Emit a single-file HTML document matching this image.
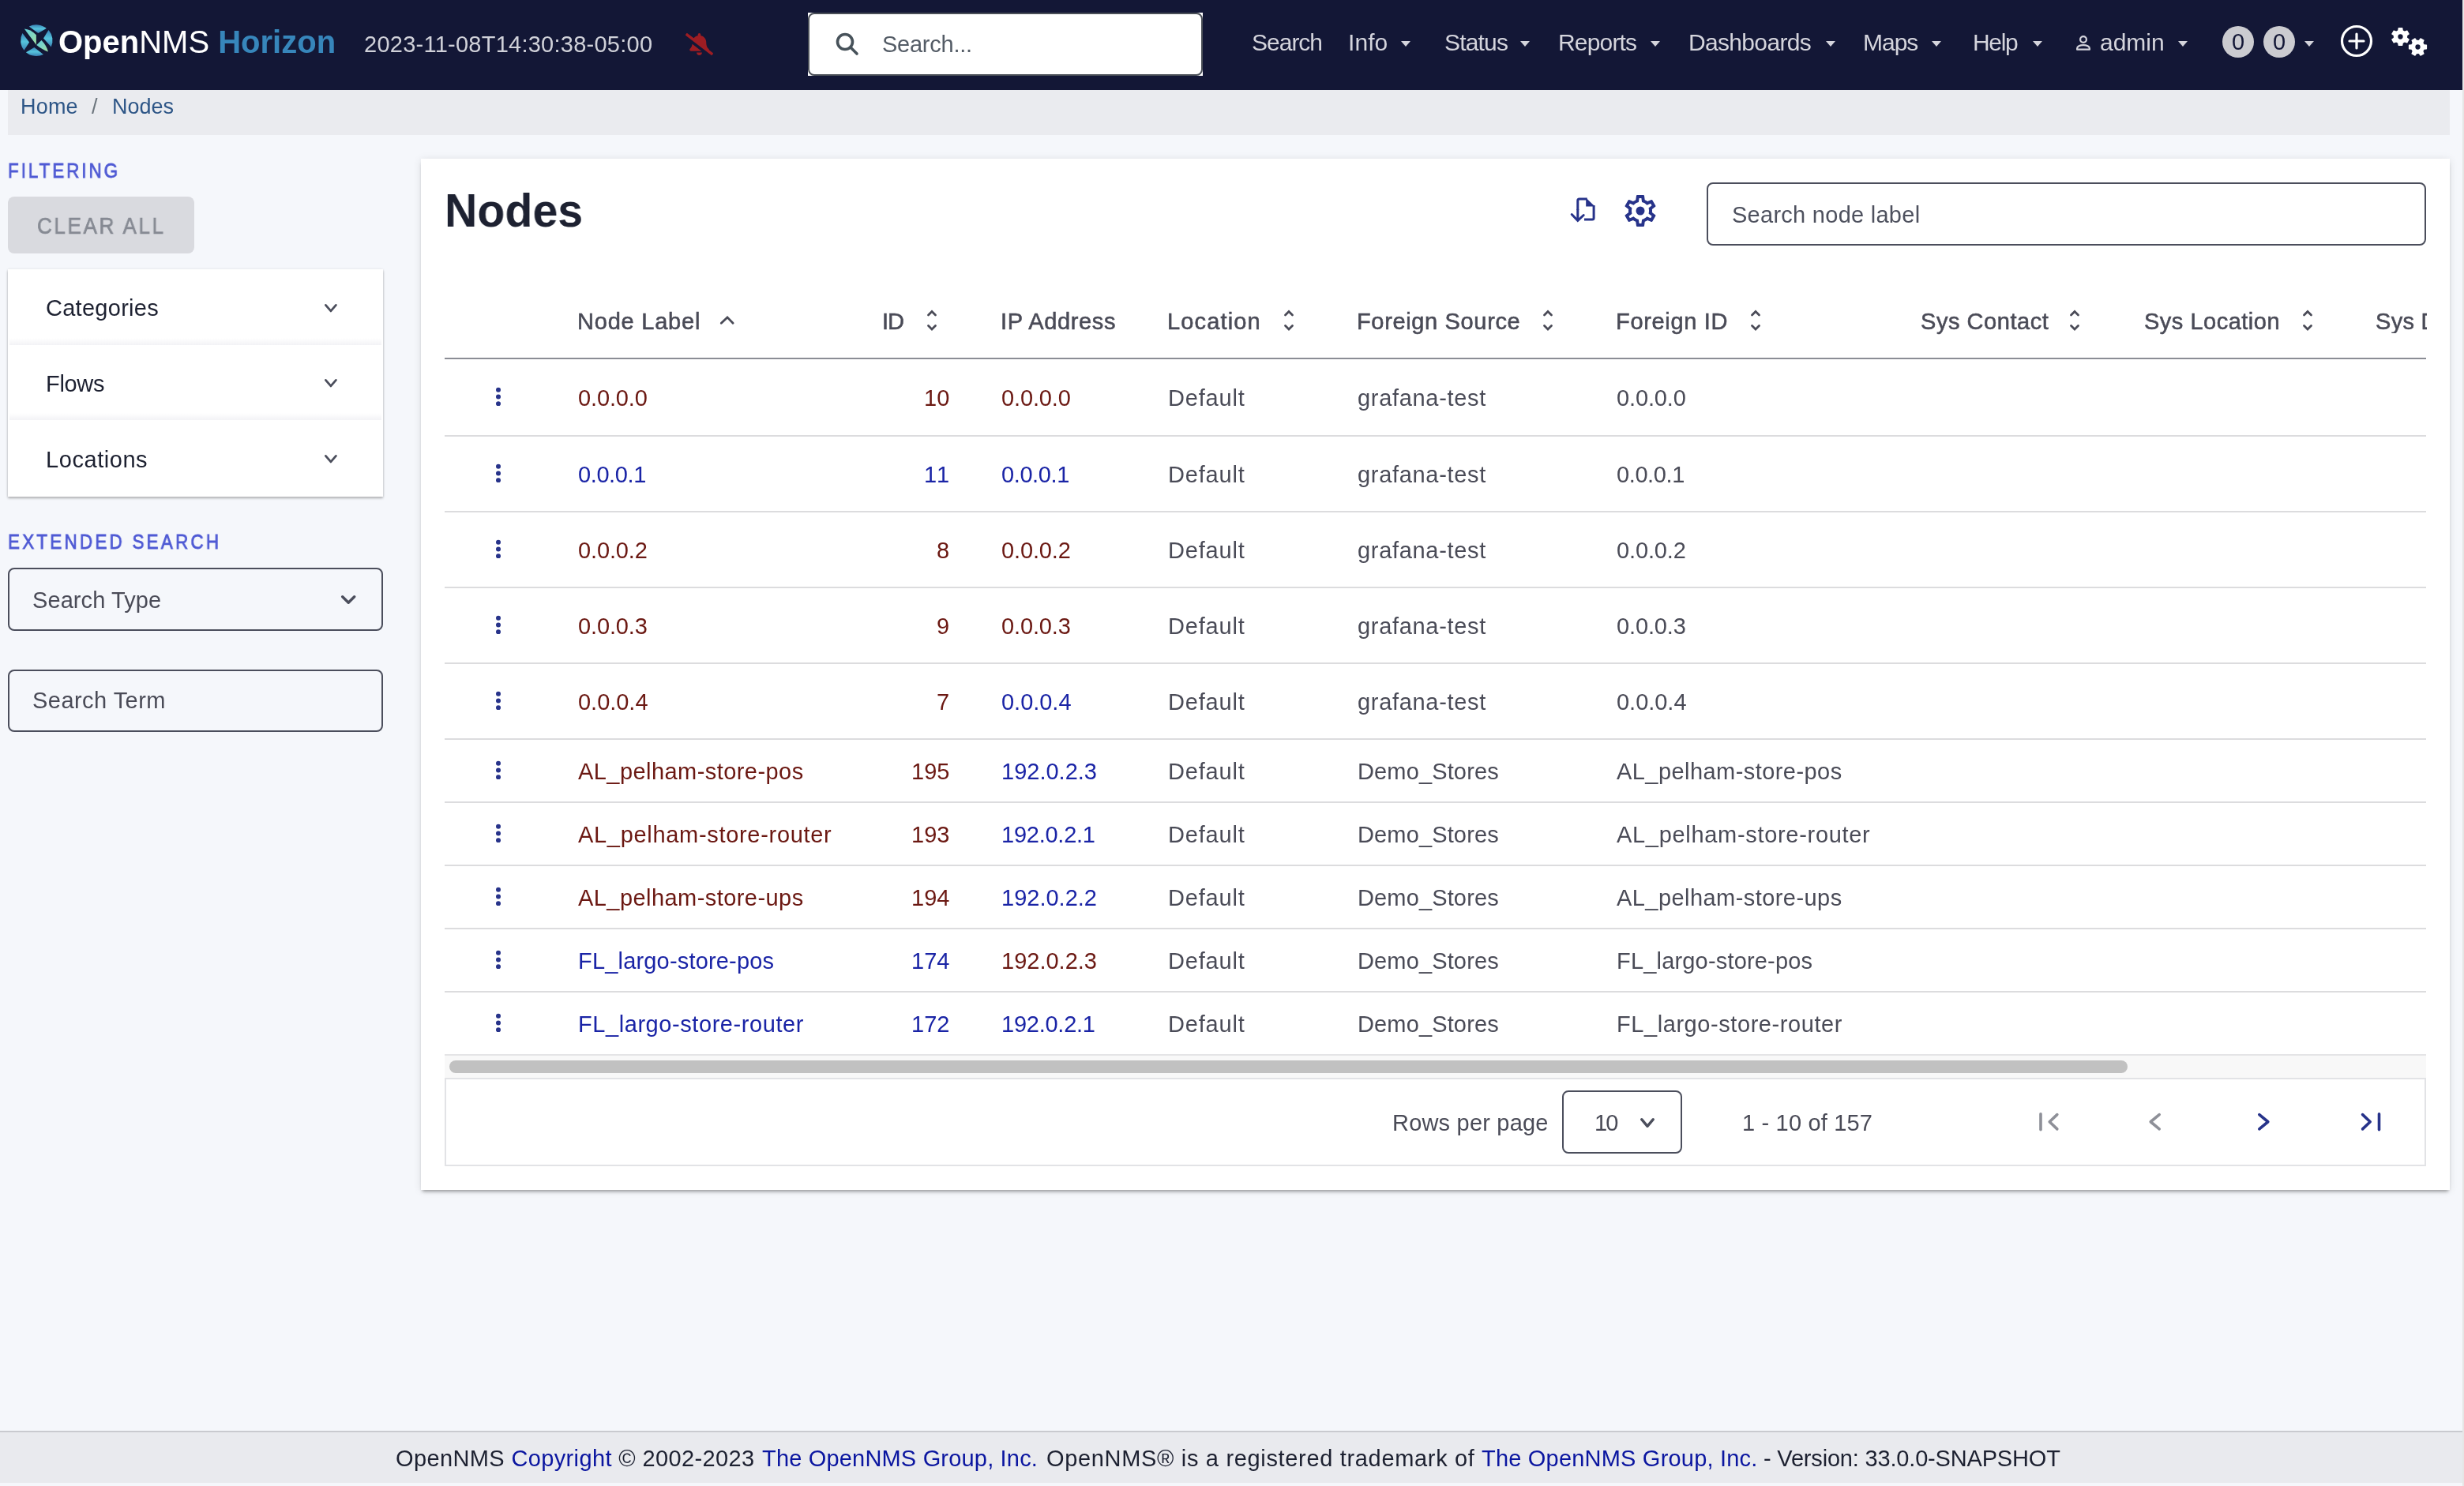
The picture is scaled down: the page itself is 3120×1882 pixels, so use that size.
<!DOCTYPE html><html><head><meta charset="utf-8"><style>
html,body{margin:0;padding:0;background:#f5f7fb;}
body{width:3120px;height:1882px;overflow:hidden;position:relative;background:#f5f7fb;font-family:"Liberation Sans", sans-serif;}
.t{position:absolute;white-space:nowrap;will-change:transform;}
.b{position:absolute;}
</style></head><body>
<div class="b" style="left:3118px;top:0px;width:2px;height:1882px;background:#e6e6e6;"></div>
<div class="b" style="left:0px;top:0px;width:3118px;height:114px;background:#131736;"></div>
<svg class="b" style="left:20px;top:26px" width="52" height="52" viewBox="0 0 52 52"><defs><linearGradient id="lg" x1="0" y1="0" x2="0" y2="1"><stop offset="0" stop-color="#3a84b8"/><stop offset="0.5" stop-color="#56c4dd"/><stop offset="1" stop-color="#3a80b4"/></linearGradient>
<linearGradient id="lf" x1="0" y1="0" x2="1" y2="1"><stop offset="0" stop-color="#62d0dc"/><stop offset="0.5" stop-color="#80d6c4"/><stop offset="1" stop-color="#a0e0a0"/></linearGradient></defs>
<g fill="url(#lg)">
<path d="M16.8 7.5 A20.2 20.2 0 0 1 38.8 10 L28.3 15.9 Z"/>
<path d="M41.5 12.1 A20.2 20.2 0 0 1 44.8 33.6 L35 22.4 Z"/>
<path d="M35 42.9 A20.2 20.2 0 0 1 12.9 40.2 L23.4 34.1 Z"/>
<path d="M10.5 37.8 A20.2 20.2 0 0 1 8.4 15.9 L17.1 27.6 Z"/>
</g>
<g fill="url(#lf)">
<path d="M10.8 10.5 C15.7 10.8 21 13.3 25.9 18.2 L25.9 30.8 Z"/>
<path d="M26.2 31.1 L32.5 25 C37 29.5 40 35 40.9 39.5 C36 38 31 35 26.2 31.1 Z"/>
</g>
</svg>
<div class="t " style="left:74.0px;top:33.1px;font-size:40px;line-height:40px;color:#ffffff;"><b>Open</b>NMS <b style="color:#3786bb">Horizon</b></div>
<div class="t " style="left:461.0px;top:41.9px;font-size:29px;line-height:29px;color:#d0d1d9;letter-spacing:0.25px;">2023-11-08T14:30:38-05:00</div>
<svg class="b" style="left:868px;top:42px" width="35" height="28" viewBox="0 0 640 512"><path fill="#9d1d23" d="M633.82 458.1l-90.62-70.05c.19-1.38.8-2.66.8-4.06.05-7.55-2.610-15.27-8.61-21.71-19.32-20.75-55.470-51.96-55.47-154.21 0-77.71-54.48-139.91-127.94-155.16V32c0-17.67-14.32-32-31.98-32s-31.98 14.33-31.98 32v20.84c-40.33 8.38-74.66 31.07-97.59 62.57L45.47 3.37C38.49-2.05 28.430-.8 23.01 6.18L3.37 31.45C-2.05 38.42-.8 48.47 6.18 53.9l588.35 454.73c6.98 5.43 17.03 4.17 22.46-2.81l19.64-25.27c5.42-6.97 4.17-17.02-2.81-22.45zM157.23 251.54c-8.61 67.96-36.41 93.33-52.62 110.75-6 6.45-8.66 14.16-8.61 21.71.11 16.4 12.98 32 32.1 32h241.92L157.23 251.54zM320 512c35.32 0 63.97-28.65 63.97-64H256.03c0 35.35 28.65 64 63.970 64z"/></svg>
<div class="b" style="left:1023px;top:16px;width:500px;height:80px;background:#fff;"></div>
<div class="b" style="left:1023px;top:16px;width:500px;height:80px;box-sizing:border-box;border:2px solid #4a4f57;border-radius:8px;"></div>
<svg class="b" style="left:1057px;top:40px" width="32" height="32" viewBox="0 0 32 32"><circle cx="13" cy="13" r="9.5" fill="none" stroke="#47525a" stroke-width="3.6"/><path d="M20 20 L28 28" stroke="#47525a" stroke-width="3.6" stroke-linecap="round"/></svg>
<div class="t " style="left:1117.0px;top:41.9px;font-size:29px;line-height:29px;color:#545c66;letter-spacing:-0.25px;">Search...</div>
<div class="t " style="left:1585.0px;top:39.2px;font-size:30px;line-height:30px;color:#d4d4dc;letter-spacing:-1.00px;">Search</div>
<div class="t " style="left:1707.0px;top:39.2px;font-size:30px;line-height:30px;color:#d4d4dc;letter-spacing:0.07px;">Info</div>
<svg class="b" style="left:1774px;top:52px" width="12" height="7" viewBox="0 0 12 7"><path d="M0 0 H12 L6.0 7z" fill="#d4d4dc"/></svg>
<div class="t " style="left:1828.5px;top:39.2px;font-size:30px;line-height:30px;color:#d4d4dc;letter-spacing:-0.82px;">Status</div>
<svg class="b" style="left:1925px;top:52px" width="12" height="7" viewBox="0 0 12 7"><path d="M0 0 H12 L6.0 7z" fill="#d4d4dc"/></svg>
<div class="t " style="left:1973.0px;top:39.2px;font-size:30px;line-height:30px;color:#d4d4dc;letter-spacing:-0.83px;">Reports</div>
<svg class="b" style="left:2090px;top:52px" width="12" height="7" viewBox="0 0 12 7"><path d="M0 0 H12 L6.0 7z" fill="#d4d4dc"/></svg>
<div class="t " style="left:2138.0px;top:39.2px;font-size:30px;line-height:30px;color:#d4d4dc;letter-spacing:-0.67px;">Dashboards</div>
<svg class="b" style="left:2312px;top:52px" width="12" height="7" viewBox="0 0 12 7"><path d="M0 0 H12 L6.0 7z" fill="#d4d4dc"/></svg>
<div class="t " style="left:2359.0px;top:39.2px;font-size:30px;line-height:30px;color:#d4d4dc;letter-spacing:-1.00px;">Maps</div>
<svg class="b" style="left:2446px;top:52px" width="12" height="7" viewBox="0 0 12 7"><path d="M0 0 H12 L6.0 7z" fill="#d4d4dc"/></svg>
<div class="t " style="left:2498.0px;top:39.2px;font-size:30px;line-height:30px;color:#d4d4dc;letter-spacing:-1.33px;">Help</div>
<svg class="b" style="left:2574px;top:52px" width="12" height="7" viewBox="0 0 12 7"><path d="M0 0 H12 L6.0 7z" fill="#d4d4dc"/></svg>
<div class="t " style="left:2659.0px;top:39.2px;font-size:30px;line-height:30px;color:#d4d4dc;">admin</div>
<svg class="b" style="left:2758px;top:52px" width="12" height="7" viewBox="0 0 12 7"><path d="M0 0 H12 L6.0 7z" fill="#d4d4dc"/></svg>
<svg class="b" style="left:2628px;top:44px" width="20" height="22" viewBox="0 0 20 22"><circle cx="10" cy="6" r="3.9" fill="none" stroke="#d4d4dc" stroke-width="2.2"/><path d="M2.1 18.7 v-1.2 c0-2.6 3.6-4.4 7.9-4.4 s7.9 1.8 7.9 4.4 v1.2z" fill="none" stroke="#d4d4dc" stroke-width="2.2" stroke-linejoin="round"/></svg>
<div class="b" style="left:2814px;top:33px;width:40px;height:40px;background:#cbcbd0;border-radius:50%;"></div>
<div class="t " style="left:2825.5px;top:38.9px;font-size:29px;line-height:29px;color:#131736;">0</div>
<div class="b" style="left:2866px;top:33px;width:40px;height:40px;background:#cbcbd0;border-radius:50%;"></div>
<div class="t " style="left:2877.5px;top:38.9px;font-size:29px;line-height:29px;color:#131736;">0</div>
<svg class="b" style="left:2918px;top:52px" width="12" height="7" viewBox="0 0 12 7"><path d="M0 0 H12 L6.0 7z" fill="#d4d4dc"/></svg>
<svg class="b" style="left:2962px;top:30px" width="44" height="44" viewBox="0 0 44 44"><circle cx="22" cy="22" r="18.5" fill="none" stroke="#fff" stroke-width="3.2"/><path d="M22 13 V31 M13 22 H31" stroke="#fff" stroke-width="3.2" stroke-linecap="round"/></svg>
<svg class="b" style="left:3024.8px;top:31.7px" width="29" height="29" viewBox="0 0 24 24"><path d="M19.14 12.94c.04-.3.06-.61.06-.94 0-.32-.02-.64-.07-.94l2.03-1.58c.18-.14.23-.41.12-.61l-1.92-3.32c-.12-.22-.37-.29-.59-.22l-2.39.96c-.5-.38-1.03-.7-1.62-.94l-.36-2.54c-.04-.24-.24-.41-.48-.41h-3.84c-.24 0-.43.17-.47.41l-.36 2.54c-.59.24-1.13.57-1.62.94l-2.39-.96c-.22-.08-.47 0-.59.22L2.74 8.870c-.12.21-.08.47.12.61l2.03 1.58c-.05.3-.09.63-.09.94s.02.64.07.94l-2.03 1.58c-.18.14-.23.41-.12.61l1.92 3.32c.12.22.37.29.59.22l2.39-.96c.5.38 1.03.7 1.62.94l.36 2.54c.05.24.24.41.48.41h3.84c.24 0 .44-.17.47-.41l.36-2.54c.59-.24 1.13-.56 1.62-.94l2.39.96c.22.08.47 0 .59-.22l1.92-3.32c.12-.22.07-.47-.12-.61l-2.01-1.58z" fill="#fff"/><circle cx="12" cy="12" r="2.6" fill="#131736"/></svg>
<svg class="b" style="left:3046.9px;top:45.3px" width="29" height="29" viewBox="0 0 24 24"><g transform="rotate(30 12 12)"><path d="M19.14 12.94c.04-.3.06-.61.06-.94 0-.32-.02-.64-.07-.94l2.03-1.58c.18-.14.23-.41.12-.61l-1.92-3.32c-.12-.22-.37-.29-.59-.22l-2.39.96c-.5-.38-1.03-.7-1.62-.94l-.36-2.54c-.04-.24-.24-.41-.48-.41h-3.84c-.24 0-.43.17-.47.41l-.36 2.54c-.59.24-1.13.57-1.62.94l-2.39-.96c-.22-.08-.47 0-.59.22L2.74 8.870c-.12.21-.08.47.12.61l2.03 1.58c-.05.3-.09.63-.09.94s.02.64.07.94l-2.03 1.58c-.18.14-.23.41-.12.61l1.92 3.32c.12.22.37.29.59.22l2.39-.96c.5.38 1.03.7 1.62.94l.36 2.54c.05.24.24.41.48.41h3.84c.24 0 .44-.17.47-.41l.36-2.54c.59-.24 1.13-.56 1.62-.94l2.39.96c.22.08.47 0 .59-.22l1.92-3.32c.12-.22.07-.47-.12-.61l-2.01-1.58z" fill="#fff"/></g><circle cx="12" cy="12" r="2.6" fill="#131736"/></svg>
<div class="b" style="left:10px;top:114px;width:3092px;height:57px;background:#eaebef;"></div>
<div class="t " style="left:26.0px;top:121.7px;font-size:27px;line-height:27px;color:#2e5687;letter-spacing:0.20px;">Home</div>
<div class="t " style="left:116.0px;top:121.7px;font-size:27px;line-height:27px;color:#6c757d;">/</div>
<div class="t " style="left:142.0px;top:121.7px;font-size:27px;line-height:27px;color:#2e5687;">Nodes</div>
<div class="t " style="left:10.0px;top:204.1px;font-size:25.5px;line-height:25.5px;color:#4f5ad4;letter-spacing:3.35px;-webkit-text-stroke:0.8px currentColor;transform:scaleX(0.88);transform-origin:0 0;">FILTERING</div>
<div class="b" style="left:10px;top:249px;width:236px;height:72px;background:#d9dadf;border-radius:8px;"></div>
<div class="t " style="left:47.0px;top:272.4px;font-size:29px;line-height:29px;color:#868a93;letter-spacing:2.90px;-webkit-text-stroke:0.7px currentColor;transform:scaleX(0.9);transform-origin:0 0;">CLEAR ALL</div>
<div class="b" style="left:10px;top:341px;width:475px;height:288px;background:#fff;box-shadow:0 2px 3px rgba(0,0,0,0.28),0 0 3px rgba(0,0,0,0.08);"></div>
<div class="b" style="left:12px;top:428px;width:471px;height:9px;background:linear-gradient(rgba(244,244,246,0),#f3f3f6);"></div>
<div class="b" style="left:12px;top:523px;width:471px;height:9px;background:linear-gradient(rgba(244,244,246,0),#f3f3f6);"></div>
<div class="t " style="left:58.0px;top:375.9px;font-size:29px;line-height:29px;color:#1d2131;letter-spacing:0.27px;">Categories</div>
<svg class="b" style="left:406.7px;top:380.5px" width="23" height="18" viewBox="0 0 23 18"><path d="M5.40 5.40 L11.90 12.90 L18.40 5.40" fill="none" stroke="#4b4e5c" stroke-width="2.8" stroke-linecap="round" stroke-linejoin="round"/></svg>
<div class="t " style="left:58.0px;top:472.4px;font-size:29px;line-height:29px;color:#1d2131;letter-spacing:-0.32px;">Flows</div>
<svg class="b" style="left:406.7px;top:476px" width="23" height="18" viewBox="0 0 23 18"><path d="M5.40 5.40 L11.90 12.90 L18.40 5.40" fill="none" stroke="#4b4e5c" stroke-width="2.8" stroke-linecap="round" stroke-linejoin="round"/></svg>
<div class="t " style="left:58.0px;top:568.4px;font-size:29px;line-height:29px;color:#1d2131;letter-spacing:0.56px;">Locations</div>
<svg class="b" style="left:406.7px;top:572px" width="23" height="18" viewBox="0 0 23 18"><path d="M5.40 5.40 L11.90 12.90 L18.40 5.40" fill="none" stroke="#4b4e5c" stroke-width="2.8" stroke-linecap="round" stroke-linejoin="round"/></svg>
<div class="t " style="left:10.0px;top:673.8px;font-size:25.5px;line-height:25.5px;color:#4f5ad4;letter-spacing:3.66px;-webkit-text-stroke:0.8px currentColor;transform:scaleX(0.88);transform-origin:0 0;">EXTENDED SEARCH</div>
<div class="b" style="left:10px;top:719px;width:475px;height:80px;box-sizing:border-box;border:2px solid #4b4e5c;border-radius:8px;"></div>
<div class="t " style="left:41.0px;top:745.9px;font-size:29px;line-height:29px;color:#4a4b57;letter-spacing:0.09px;">Search Type</div>
<svg class="b" style="left:427.6px;top:750px" width="26" height="19" viewBox="0 0 26 19"><path d="M5.70 5.70 L13.20 13.30 L20.70 5.70" fill="none" stroke="#4b4e5c" stroke-width="3.4" stroke-linecap="round" stroke-linejoin="round"/></svg>
<div class="b" style="left:10px;top:848px;width:475px;height:79px;box-sizing:border-box;border:2px solid #4b4e5c;border-radius:8px;"></div>
<div class="t " style="left:41.0px;top:873.4px;font-size:29px;line-height:29px;color:#4a4b57;letter-spacing:0.46px;">Search Term</div>
<div class="b" style="left:533px;top:201px;width:2569px;height:1306px;background:#fff;box-shadow:0 4px 4px -2px rgba(0,0,0,0.34),0 1px 10px rgba(0,0,0,0.10);"></div>
<div class="t " style="left:563.0px;top:237.2px;font-size:60px;line-height:60px;color:#1d2131;font-weight:700;transform:scaleX(0.955);transform-origin:0 0;">Nodes</div>
<svg class="b" style="left:1986px;top:246px" width="38" height="38" viewBox="0 0 38 38"><path d="M11.8 20 V8 a2 2 0 0 1 2-2 H23.7" fill="none" stroke="#27338a" stroke-width="3"/><path d="M22.2 4.5 L33.6 15.5 H22.2z" fill="#27338a"/><path d="M32.1 14 V30 a2 2 0 0 1 -2 2 H20" fill="none" stroke="#27338a" stroke-width="3"/><path d="M11.8 19 V33" fill="none" stroke="#27338a" stroke-width="3"/><path d="M4.2 25.5 L11.8 33.3 L19.2 26.5" fill="none" stroke="#27338a" stroke-width="3" stroke-linecap="round" stroke-linejoin="miter"/></svg>
<svg class="b" style="left:2053px;top:243px" width="48" height="48" viewBox="0 0 24 24"><path d="M19.43 12.98c.04-.32.07-.64.07-.98 0-.34-.03-.66-.07-.98l2.11-1.65c.19-.15.24-.42.12-.64l-2-3.46c-.09-.16-.26-.25-.44-.25-.06 0-.12.01-.17.03l-2.49 1c-.52-.4-1.08-.73-1.690-.98l-.38-2.65C14.46 2.18 14.25 2 14 2h-4c-.25 0-.46.18-.49.42l-.38 2.65c-.61.25-1.17.59-1.69.98l-2.49-1c-.06-.02-.12-.03-.18-.03-.17 0-.34.09-.43.25l-2 3.460c-.13.22-.07.49.12.64l2.11 1.65c-.04.32-.07.65-.07.98 0 .33.03.66.07.98l-2.11 1.65c-.19.15-.24.42-.12.64l2 3.46c.09.16.26.25.44.25.06 0 .12-.01.17-.03l2.49-1c.52.4 1.08.73 1.69.98l.38 2.65c.03.24.24.42.49.42h4c.25 0 .46-.18.49-.42l.38-2.65c.61-.25 1.17-.59 1.69-.98l2.49 1c.06.02.12.03.18.03.17 0 .34-.09.43-.25l2-3.46c.12-.22.07-.49-.12-.64l-2.11-1.65zm-1.98-1.71c.04.31.05.52.05.73 0 .21-.02.43-.05.73l-.14 1.13.89.7 1.08.84-.7 1.21-1.27-.51-1.04-.42-.9.68c-.43.32-.84.56-1.25.73l-1.06.43-.16 1.130-.2 1.35h-1.4l-.19-1.35-.16-1.13-1.06-.43c-.43-.18-.83-.41-1.23-.71l-.91-.7-1.06.43-1.27.51-.7-1.21 1.08-.84.89-.7-.14-1.13c-.03-.31-.05-.54-.05-.74s.02-.43.05-.73l.14-1.13-.89-.7-1.08-.84.7-1.21 1.27.51 1.04.42.9-.68c.43-.32.84-.56 1.25-.73l1.06-.43.16-1.13.2-1.35h1.39l.19 1.35.16 1.13 1.06.43c.43.18.83.41 1.23.71l.91.7 1.06-.43 1.27-.51.7 1.21-1.07.85-.89.7.14 1.13z" fill="#27338a" fill-rule="evenodd"/><circle cx="12" cy="12" r="2.75" fill="#27338a"/></svg>
<div class="b" style="left:2161px;top:231px;width:911px;height:80px;box-sizing:border-box;border:2px solid #4b4e5c;border-radius:8px;"></div>
<div class="t " style="left:2193.0px;top:257.7px;font-size:29px;line-height:29px;color:#4e515e;letter-spacing:0.27px;">Search node label</div>
<div class="t " style="left:731.0px;top:392.6px;font-size:29px;line-height:29px;color:#4a4b57;letter-spacing:0.78px;-webkit-text-stroke:0.55px currentColor;">Node Label</div>
<svg class="b" style="left:908px;top:396px" width="26" height="18" viewBox="0 0 26 18"><path d="M5.3 13.3 L13 5.9 L20.1 13.3" fill="none" stroke="#4a4b57" stroke-width="2.8" stroke-linecap="round" stroke-linejoin="miter"/></svg>
<div class="t " style="left:1117.0px;top:392.6px;font-size:29px;line-height:29px;color:#4a4b57;letter-spacing:-1.00px;-webkit-text-stroke:0.55px currentColor;">ID</div>
<svg class="b" style="left:1170.0px;top:388px" width="20" height="36" viewBox="0 0 20 36"><path d="M5.5 11 L10 6.5 L14.5 11 M5.5 24.5 L10 29 L14.5 24.5" fill="none" stroke="#4a4b57" stroke-width="2.8" stroke-linecap="round" stroke-linejoin="miter"/></svg>
<div class="t " style="left:1267.0px;top:392.6px;font-size:29px;line-height:29px;color:#4a4b57;letter-spacing:0.63px;-webkit-text-stroke:0.55px currentColor;">IP Address</div>
<div class="t " style="left:1478.0px;top:392.6px;font-size:29px;line-height:29px;color:#4a4b57;letter-spacing:1.14px;-webkit-text-stroke:0.55px currentColor;">Location</div>
<svg class="b" style="left:1622.0px;top:388px" width="20" height="36" viewBox="0 0 20 36"><path d="M5.5 11 L10 6.5 L14.5 11 M5.5 24.5 L10 29 L14.5 24.5" fill="none" stroke="#4a4b57" stroke-width="2.8" stroke-linecap="round" stroke-linejoin="miter"/></svg>
<div class="t " style="left:1718.0px;top:392.6px;font-size:29px;line-height:29px;color:#4a4b57;letter-spacing:0.65px;-webkit-text-stroke:0.55px currentColor;">Foreign Source</div>
<svg class="b" style="left:1950.0px;top:388px" width="20" height="36" viewBox="0 0 20 36"><path d="M5.5 11 L10 6.5 L14.5 11 M5.5 24.5 L10 29 L14.5 24.5" fill="none" stroke="#4a4b57" stroke-width="2.8" stroke-linecap="round" stroke-linejoin="miter"/></svg>
<div class="t " style="left:2046.0px;top:392.6px;font-size:29px;line-height:29px;color:#4a4b57;letter-spacing:0.67px;-webkit-text-stroke:0.55px currentColor;">Foreign ID</div>
<svg class="b" style="left:2213.0px;top:388px" width="20" height="36" viewBox="0 0 20 36"><path d="M5.5 11 L10 6.5 L14.5 11 M5.5 24.5 L10 29 L14.5 24.5" fill="none" stroke="#4a4b57" stroke-width="2.8" stroke-linecap="round" stroke-linejoin="miter"/></svg>
<div class="t " style="left:2432.0px;top:392.6px;font-size:29px;line-height:29px;color:#4a4b57;letter-spacing:0.54px;-webkit-text-stroke:0.55px currentColor;">Sys Contact</div>
<svg class="b" style="left:2617.0px;top:388px" width="20" height="36" viewBox="0 0 20 36"><path d="M5.5 11 L10 6.5 L14.5 11 M5.5 24.5 L10 29 L14.5 24.5" fill="none" stroke="#4a4b57" stroke-width="2.8" stroke-linecap="round" stroke-linejoin="miter"/></svg>
<div class="t " style="left:2715.0px;top:392.6px;font-size:29px;line-height:29px;color:#4a4b57;letter-spacing:0.50px;-webkit-text-stroke:0.55px currentColor;">Sys Location</div>
<svg class="b" style="left:2912.0px;top:388px" width="20" height="36" viewBox="0 0 20 36"><path d="M5.5 11 L10 6.5 L14.5 11 M5.5 24.5 L10 29 L14.5 24.5" fill="none" stroke="#4a4b57" stroke-width="2.8" stroke-linecap="round" stroke-linejoin="miter"/></svg>
<div class="t " style="left:3008.0px;top:392.6px;font-size:29px;line-height:29px;color:#4a4b57;letter-spacing:0.30px;-webkit-text-stroke:0.55px currentColor;width:65px;overflow:hidden;">Sys Description</div>
<div class="b" style="left:563px;top:453px;width:2509px;height:2px;background:#8b8d95;"></div>
<svg class="b" style="left:626px;top:489.5px" width="10" height="24" viewBox="0 0 10 24"><circle cx="5" cy="3.8" r="3" fill="#27338a"/><circle cx="5" cy="12.5" r="3" fill="#27338a"/><circle cx="5" cy="21.3" r="3" fill="#27338a"/></svg>
<div class="t " style="left:732.0px;top:489.6px;font-size:29px;line-height:29px;color:#6b1812;letter-spacing:-0.13px;">0.0.0.0</div>
<div class="t" style="right:1918.0px;top:489.6px;font-size:29px;line-height:29px;color:#6b1812;letter-spacing:0.00px;">10</div>
<div class="t " style="left:1268.0px;top:489.6px;font-size:29px;line-height:29px;color:#6b1812;letter-spacing:-0.13px;">0.0.0.0</div>
<div class="t " style="left:1479.0px;top:489.6px;font-size:29px;line-height:29px;color:#4a4b57;letter-spacing:0.83px;">Default</div>
<div class="t " style="left:1719.0px;top:489.6px;font-size:29px;line-height:29px;color:#4a4b57;letter-spacing:0.69px;">grafana-test</div>
<div class="t " style="left:2047.0px;top:489.6px;font-size:29px;line-height:29px;color:#4a4b57;letter-spacing:-0.13px;">0.0.0.0</div>
<div class="b" style="left:563px;top:551px;width:2509px;height:2px;background:#dcdcde;"></div>
<svg class="b" style="left:626px;top:586.5px" width="10" height="24" viewBox="0 0 10 24"><circle cx="5" cy="3.8" r="3" fill="#27338a"/><circle cx="5" cy="12.5" r="3" fill="#27338a"/><circle cx="5" cy="21.3" r="3" fill="#27338a"/></svg>
<div class="t " style="left:732.0px;top:586.6px;font-size:29px;line-height:29px;color:#1a24a6;letter-spacing:-0.40px;">0.0.0.1</div>
<div class="t" style="right:1916.0px;top:586.6px;font-size:29px;line-height:29px;color:#1a24a6;letter-spacing:2.00px;">11</div>
<div class="t " style="left:1268.0px;top:586.6px;font-size:29px;line-height:29px;color:#1a24a6;letter-spacing:-0.40px;">0.0.0.1</div>
<div class="t " style="left:1479.0px;top:586.6px;font-size:29px;line-height:29px;color:#4a4b57;letter-spacing:0.83px;">Default</div>
<div class="t " style="left:1719.0px;top:586.6px;font-size:29px;line-height:29px;color:#4a4b57;letter-spacing:0.69px;">grafana-test</div>
<div class="t " style="left:2047.0px;top:586.6px;font-size:29px;line-height:29px;color:#4a4b57;letter-spacing:-0.40px;">0.0.0.1</div>
<div class="b" style="left:563px;top:647px;width:2509px;height:2px;background:#dcdcde;"></div>
<svg class="b" style="left:626px;top:682.5px" width="10" height="24" viewBox="0 0 10 24"><circle cx="5" cy="3.8" r="3" fill="#27338a"/><circle cx="5" cy="12.5" r="3" fill="#27338a"/><circle cx="5" cy="21.3" r="3" fill="#27338a"/></svg>
<div class="t " style="left:732.0px;top:682.6px;font-size:29px;line-height:29px;color:#6b1812;letter-spacing:-0.13px;">0.0.0.2</div>
<div class="t" style="right:1918.0px;top:682.6px;font-size:29px;line-height:29px;color:#6b1812;letter-spacing:0.00px;">8</div>
<div class="t " style="left:1268.0px;top:682.6px;font-size:29px;line-height:29px;color:#6b1812;letter-spacing:-0.13px;">0.0.0.2</div>
<div class="t " style="left:1479.0px;top:682.6px;font-size:29px;line-height:29px;color:#4a4b57;letter-spacing:0.83px;">Default</div>
<div class="t " style="left:1719.0px;top:682.6px;font-size:29px;line-height:29px;color:#4a4b57;letter-spacing:0.69px;">grafana-test</div>
<div class="t " style="left:2047.0px;top:682.6px;font-size:29px;line-height:29px;color:#4a4b57;letter-spacing:-0.13px;">0.0.0.2</div>
<div class="b" style="left:563px;top:743px;width:2509px;height:2px;background:#dcdcde;"></div>
<svg class="b" style="left:626px;top:778.5px" width="10" height="24" viewBox="0 0 10 24"><circle cx="5" cy="3.8" r="3" fill="#27338a"/><circle cx="5" cy="12.5" r="3" fill="#27338a"/><circle cx="5" cy="21.3" r="3" fill="#27338a"/></svg>
<div class="t " style="left:732.0px;top:778.6px;font-size:29px;line-height:29px;color:#6b1812;letter-spacing:-0.13px;">0.0.0.3</div>
<div class="t" style="right:1918.0px;top:778.6px;font-size:29px;line-height:29px;color:#6b1812;letter-spacing:0.00px;">9</div>
<div class="t " style="left:1268.0px;top:778.6px;font-size:29px;line-height:29px;color:#6b1812;letter-spacing:-0.13px;">0.0.0.3</div>
<div class="t " style="left:1479.0px;top:778.6px;font-size:29px;line-height:29px;color:#4a4b57;letter-spacing:0.83px;">Default</div>
<div class="t " style="left:1719.0px;top:778.6px;font-size:29px;line-height:29px;color:#4a4b57;letter-spacing:0.69px;">grafana-test</div>
<div class="t " style="left:2047.0px;top:778.6px;font-size:29px;line-height:29px;color:#4a4b57;letter-spacing:-0.13px;">0.0.0.3</div>
<div class="b" style="left:563px;top:839px;width:2509px;height:2px;background:#dcdcde;"></div>
<svg class="b" style="left:626px;top:874.5px" width="10" height="24" viewBox="0 0 10 24"><circle cx="5" cy="3.8" r="3" fill="#27338a"/><circle cx="5" cy="12.5" r="3" fill="#27338a"/><circle cx="5" cy="21.3" r="3" fill="#27338a"/></svg>
<div class="t " style="left:732.0px;top:874.6px;font-size:29px;line-height:29px;color:#6b1812;letter-spacing:-0.03px;">0.0.0.4</div>
<div class="t" style="right:1918.0px;top:874.6px;font-size:29px;line-height:29px;color:#6b1812;letter-spacing:0.00px;">7</div>
<div class="t " style="left:1268.0px;top:874.6px;font-size:29px;line-height:29px;color:#1a24a6;letter-spacing:-0.03px;">0.0.0.4</div>
<div class="t " style="left:1479.0px;top:874.6px;font-size:29px;line-height:29px;color:#4a4b57;letter-spacing:0.83px;">Default</div>
<div class="t " style="left:1719.0px;top:874.6px;font-size:29px;line-height:29px;color:#4a4b57;letter-spacing:0.69px;">grafana-test</div>
<div class="t " style="left:2047.0px;top:874.6px;font-size:29px;line-height:29px;color:#4a4b57;letter-spacing:-0.03px;">0.0.0.4</div>
<div class="b" style="left:563px;top:935px;width:2509px;height:2px;background:#dcdcde;"></div>
<svg class="b" style="left:626px;top:962.5px" width="10" height="24" viewBox="0 0 10 24"><circle cx="5" cy="3.8" r="3" fill="#27338a"/><circle cx="5" cy="12.5" r="3" fill="#27338a"/><circle cx="5" cy="21.3" r="3" fill="#27338a"/></svg>
<div class="t " style="left:732.0px;top:962.6px;font-size:29px;line-height:29px;color:#6b1812;letter-spacing:0.44px;">AL_pelham-store-pos</div>
<div class="t" style="right:1918.0px;top:962.6px;font-size:29px;line-height:29px;color:#6b1812;letter-spacing:0.00px;">195</div>
<div class="t " style="left:1268.0px;top:962.6px;font-size:29px;line-height:29px;color:#1a24a6;">192.0.2.3</div>
<div class="t " style="left:1479.0px;top:962.6px;font-size:29px;line-height:29px;color:#4a4b57;letter-spacing:0.83px;">Default</div>
<div class="t " style="left:1719.0px;top:962.6px;font-size:29px;line-height:29px;color:#4a4b57;letter-spacing:0.14px;">Demo_Stores</div>
<div class="t " style="left:2047.0px;top:962.6px;font-size:29px;line-height:29px;color:#4a4b57;letter-spacing:0.44px;">AL_pelham-store-pos</div>
<div class="b" style="left:563px;top:1015px;width:2509px;height:2px;background:#dcdcde;"></div>
<svg class="b" style="left:626px;top:1042.5px" width="10" height="24" viewBox="0 0 10 24"><circle cx="5" cy="3.8" r="3" fill="#27338a"/><circle cx="5" cy="12.5" r="3" fill="#27338a"/><circle cx="5" cy="21.3" r="3" fill="#27338a"/></svg>
<div class="t " style="left:732.0px;top:1042.6px;font-size:29px;line-height:29px;color:#6b1812;letter-spacing:0.69px;">AL_pelham-store-router</div>
<div class="t" style="right:1918.0px;top:1042.6px;font-size:29px;line-height:29px;color:#6b1812;letter-spacing:0.00px;">193</div>
<div class="t " style="left:1268.0px;top:1042.6px;font-size:29px;line-height:29px;color:#1a24a6;letter-spacing:-0.25px;">192.0.2.1</div>
<div class="t " style="left:1479.0px;top:1042.6px;font-size:29px;line-height:29px;color:#4a4b57;letter-spacing:0.83px;">Default</div>
<div class="t " style="left:1719.0px;top:1042.6px;font-size:29px;line-height:29px;color:#4a4b57;letter-spacing:0.14px;">Demo_Stores</div>
<div class="t " style="left:2047.0px;top:1042.6px;font-size:29px;line-height:29px;color:#4a4b57;letter-spacing:0.69px;">AL_pelham-store-router</div>
<div class="b" style="left:563px;top:1095px;width:2509px;height:2px;background:#dcdcde;"></div>
<svg class="b" style="left:626px;top:1122.5px" width="10" height="24" viewBox="0 0 10 24"><circle cx="5" cy="3.8" r="3" fill="#27338a"/><circle cx="5" cy="12.5" r="3" fill="#27338a"/><circle cx="5" cy="21.3" r="3" fill="#27338a"/></svg>
<div class="t " style="left:732.0px;top:1122.6px;font-size:29px;line-height:29px;color:#6b1812;letter-spacing:0.44px;">AL_pelham-store-ups</div>
<div class="t" style="right:1918.0px;top:1122.6px;font-size:29px;line-height:29px;color:#6b1812;letter-spacing:0.00px;">194</div>
<div class="t " style="left:1268.0px;top:1122.6px;font-size:29px;line-height:29px;color:#1a24a6;">192.0.2.2</div>
<div class="t " style="left:1479.0px;top:1122.6px;font-size:29px;line-height:29px;color:#4a4b57;letter-spacing:0.83px;">Default</div>
<div class="t " style="left:1719.0px;top:1122.6px;font-size:29px;line-height:29px;color:#4a4b57;letter-spacing:0.14px;">Demo_Stores</div>
<div class="t " style="left:2047.0px;top:1122.6px;font-size:29px;line-height:29px;color:#4a4b57;letter-spacing:0.44px;">AL_pelham-store-ups</div>
<div class="b" style="left:563px;top:1175px;width:2509px;height:2px;background:#dcdcde;"></div>
<svg class="b" style="left:626px;top:1202.5px" width="10" height="24" viewBox="0 0 10 24"><circle cx="5" cy="3.8" r="3" fill="#27338a"/><circle cx="5" cy="12.5" r="3" fill="#27338a"/><circle cx="5" cy="21.3" r="3" fill="#27338a"/></svg>
<div class="t " style="left:732.0px;top:1202.6px;font-size:29px;line-height:29px;color:#1a24a6;letter-spacing:0.18px;">FL_largo-store-pos</div>
<div class="t" style="right:1918.0px;top:1202.6px;font-size:29px;line-height:29px;color:#1a24a6;letter-spacing:0.00px;">174</div>
<div class="t " style="left:1268.0px;top:1202.6px;font-size:29px;line-height:29px;color:#6b1812;">192.0.2.3</div>
<div class="t " style="left:1479.0px;top:1202.6px;font-size:29px;line-height:29px;color:#4a4b57;letter-spacing:0.83px;">Default</div>
<div class="t " style="left:1719.0px;top:1202.6px;font-size:29px;line-height:29px;color:#4a4b57;letter-spacing:0.14px;">Demo_Stores</div>
<div class="t " style="left:2047.0px;top:1202.6px;font-size:29px;line-height:29px;color:#4a4b57;letter-spacing:0.18px;">FL_largo-store-pos</div>
<div class="b" style="left:563px;top:1255px;width:2509px;height:2px;background:#dcdcde;"></div>
<svg class="b" style="left:626px;top:1282.5px" width="10" height="24" viewBox="0 0 10 24"><circle cx="5" cy="3.8" r="3" fill="#27338a"/><circle cx="5" cy="12.5" r="3" fill="#27338a"/><circle cx="5" cy="21.3" r="3" fill="#27338a"/></svg>
<div class="t " style="left:732.0px;top:1282.6px;font-size:29px;line-height:29px;color:#1a24a6;letter-spacing:0.57px;">FL_largo-store-router</div>
<div class="t" style="right:1918.0px;top:1282.6px;font-size:29px;line-height:29px;color:#1a24a6;letter-spacing:0.00px;">172</div>
<div class="t " style="left:1268.0px;top:1282.6px;font-size:29px;line-height:29px;color:#1a24a6;letter-spacing:-0.25px;">192.0.2.1</div>
<div class="t " style="left:1479.0px;top:1282.6px;font-size:29px;line-height:29px;color:#4a4b57;letter-spacing:0.83px;">Default</div>
<div class="t " style="left:1719.0px;top:1282.6px;font-size:29px;line-height:29px;color:#4a4b57;letter-spacing:0.14px;">Demo_Stores</div>
<div class="t " style="left:2047.0px;top:1282.6px;font-size:29px;line-height:29px;color:#4a4b57;letter-spacing:0.57px;">FL_largo-store-router</div>
<div class="b" style="left:563px;top:1335px;width:2509px;height:31px;background:#f8f8f8;border-top:2px solid #e4e4e6;box-sizing:border-box;"></div>
<div class="b" style="left:569px;top:1343px;width:2125px;height:16px;background:#c1c1c1;border-radius:8px;"></div>
<div class="b" style="left:563px;top:1365px;width:2509px;height:112px;box-sizing:border-box;border:2px solid #e2e3e6;"></div>
<div class="t " style="left:1763.0px;top:1408.2px;font-size:29px;line-height:29px;color:#4a4b57;letter-spacing:0.20px;">Rows per page</div>
<div class="b" style="left:1978px;top:1381px;width:152px;height:80px;box-sizing:border-box;border:2px solid #4b4e5c;border-radius:8px;"></div>
<div class="t " style="left:2018.5px;top:1408.2px;font-size:29px;line-height:29px;color:#4a4b57;letter-spacing:-2.00px;">10</div>
<svg class="b" style="left:2073px;top:1412px" width="26" height="20" viewBox="0 0 26 20"><path d="M5.70 5.70 L13.00 14.30 L20.30 5.70" fill="none" stroke="#4b4e5c" stroke-width="3.4" stroke-linecap="round" stroke-linejoin="round"/></svg>
<div class="t " style="left:2206.0px;top:1408.2px;font-size:29px;line-height:29px;color:#4a4b57;letter-spacing:0.18px;">1 - 10 of 157</div>
<svg class="b" style="left:2578px;top:1405px" width="34" height="32" viewBox="0 0 34 32"><path d="M6 5.8 V25.7" stroke="#8e9098" stroke-width="3.6" stroke-linecap="round"/><path d="M26.8 6.6 L17.2 15.75 L26.8 24.9" fill="none" stroke="#8e9098" stroke-width="3.6" stroke-linecap="round" stroke-linejoin="round"/></svg>
<svg class="b" style="left:2716px;top:1405px" width="26" height="32" viewBox="0 0 26 32"><path d="M18.2 6.6 L7.2 15.75 L18.2 24.9" fill="none" stroke="#8e9098" stroke-width="3.6" stroke-linecap="round" stroke-linejoin="round"/></svg>
<svg class="b" style="left:2854px;top:1405px" width="26" height="32" viewBox="0 0 26 32"><path d="M6.8 6.6 L17.8 15.75 L6.8 24.9" fill="none" stroke="#27338a" stroke-width="3.6" stroke-linecap="round" stroke-linejoin="round"/></svg>
<svg class="b" style="left:2986px;top:1405px" width="34" height="32" viewBox="0 0 34 32"><path d="M5.6 6.6 L15.2 15.75 L5.6 24.9" fill="none" stroke="#27338a" stroke-width="3.6" stroke-linecap="round" stroke-linejoin="round"/><path d="M26.5 5.8 V25.7" stroke="#27338a" stroke-width="3.6" stroke-linecap="round"/></svg>
<div class="b" style="left:0px;top:1812px;width:3118px;height:66px;background:#e9eaee;border-top:2px solid #c9cacf;box-sizing:border-box;"></div>
<div class="t " style="left:501.0px;top:1832.7px;font-size:29px;line-height:29px;color:#1d2131;letter-spacing:0.37px;">OpenNMS <span style="color:#0b16a0">Copyright</span> © 2002-2023</div>
<div class="t " style="left:965.0px;top:1832.7px;font-size:29px;line-height:29px;color:#0b16a0;letter-spacing:0.18px;">The OpenNMS Group, Inc.</div>
<div class="t " style="left:1324.5px;top:1832.7px;font-size:29px;line-height:29px;color:#1d2131;letter-spacing:0.67px;">OpenNMS® is a registered trademark of</div>
<div class="t " style="left:1876.0px;top:1832.7px;font-size:29px;line-height:29px;color:#0b16a0;letter-spacing:0.20px;">The OpenNMS Group, Inc.</div>
<div class="t " style="left:2233.0px;top:1832.7px;font-size:29px;line-height:29px;color:#1d2131;letter-spacing:-0.18px;">- Version: 33.0.0-SNAPSHOT</div>
</body></html>
